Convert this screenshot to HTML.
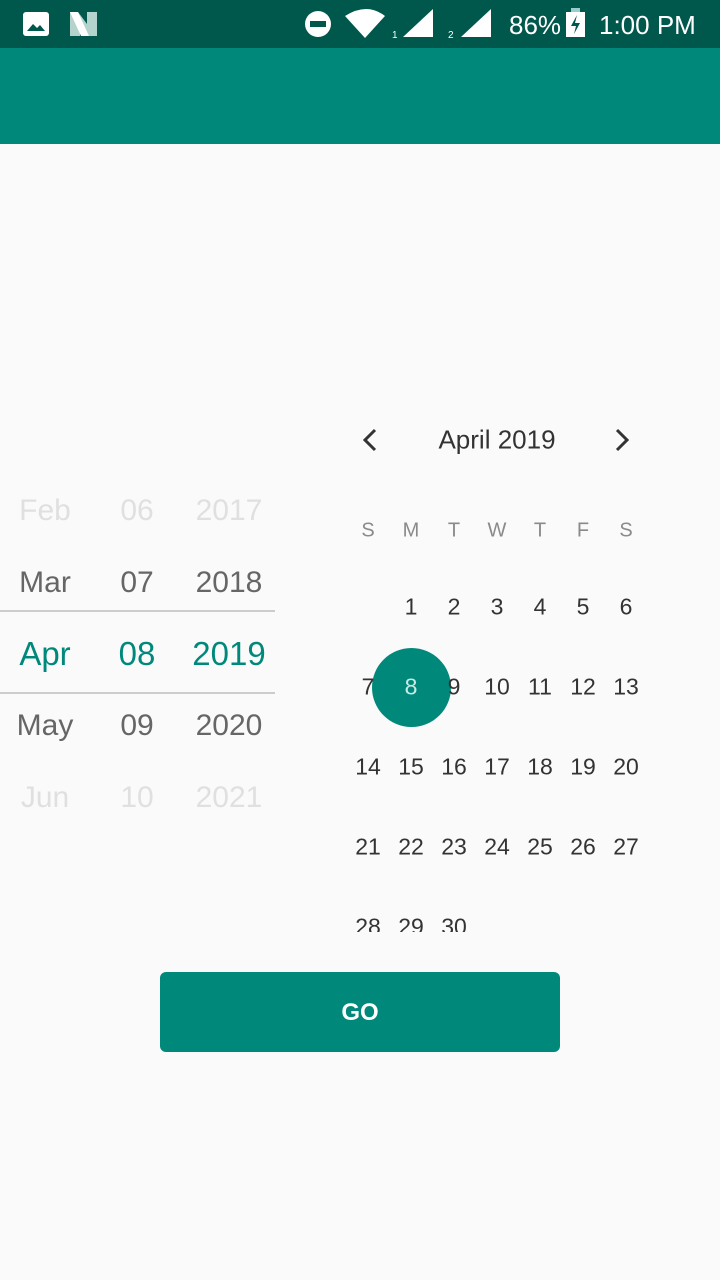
<!DOCTYPE html><html><head><style>
body{margin:0;width:720px;height:1280px;background:#fafafa;font-family:"Liberation Sans",sans-serif;position:relative;overflow:hidden}
.a{position:absolute;transform:translate(-50%,-50%);white-space:nowrap}
.sb{position:absolute;top:0;left:0;width:720px;height:48px;background:#00574b}
.tb{position:absolute;top:48px;left:0;width:720px;height:96px;background:#00897b}
.p{font-size:30px}
.d{font-size:23px;color:#333}
.w{font-size:20px;color:#8a8a8a}
</style></head><body>
<div class="sb"></div><div class="tb"></div>
<svg style="position:absolute;left:0;top:0" width="720" height="48">
<rect x="23" y="12" width="26" height="24" rx="3" fill="#fff"/><path d="M27 31l6-7 4 4 3-3 5 6z" fill="#00574b"/>
<path d="M70 12h8l9 12v-12h10v24h-8l-9-12v12h-10z" fill="#b5d3cd"/><path d="M70 12h8l11 24h-8l-11-24z" fill="#fff"/>
<circle cx="318" cy="24" r="13" fill="#fff"/><rect x="310" y="21" width="16" height="6" fill="#00574b"/>
<path d="M345 16q22-14 40 0l-20 22z" fill="#fff"/>
<text x="392" y="38" fill="#fff" font-size="10">1</text><path d="M403 37l30-28v28z" fill="#fff"/>
<text x="448" y="38" fill="#fff" font-size="10">2</text><path d="M461 37l30-28v28z" fill="#fff"/>
<text x="509" y="34" fill="#fff" font-size="26">86%</text>
<rect x="566" y="12" width="19" height="25" fill="#fff"/><rect x="571" y="8" width="9" height="4" fill="#9cc"/><path d="M577 15l-6 11h5l-2 8 6-11h-5z" fill="#00574b"/>
<text x="599" y="34" fill="#fff" font-size="26">1:00 PM</text>
</svg>
<div class="a p" style="left:45px;top:511px;color:#e0e0e0">Feb</div><div class="a p" style="left:137px;top:511px;color:#e0e0e0">06</div><div class="a p" style="left:229px;top:511px;color:#e0e0e0">2017</div>
<div class="a p" style="left:45px;top:583px;color:#666">Mar</div><div class="a p" style="left:137px;top:583px;color:#666">07</div><div class="a p" style="left:229px;top:583px;color:#666">2018</div>
<div class="a p" style="left:45px;top:654px;color:#00897b;font-size:33px">Apr</div><div class="a p" style="left:137px;top:654px;color:#00897b;font-size:33px">08</div><div class="a p" style="left:229px;top:654px;color:#00897b;font-size:33px">2019</div>
<div class="a p" style="left:45px;top:726px;color:#666">May</div><div class="a p" style="left:137px;top:726px;color:#666">09</div><div class="a p" style="left:229px;top:726px;color:#666">2020</div>
<div class="a p" style="left:45px;top:798px;color:#e0e0e0">Jun</div><div class="a p" style="left:137px;top:798px;color:#e0e0e0">10</div><div class="a p" style="left:229px;top:798px;color:#e0e0e0">2021</div>
<div style="position:absolute;left:0;top:610px;width:275px;height:2px;background:#ccc"></div>
<div style="position:absolute;left:0;top:692px;width:275px;height:2px;background:#ccc"></div>
<svg style="position:absolute;left:355px;top:425px" width="290" height="30"><path d="M20 5l-10 10 10 10M262 5l10 10-10 10" stroke="#333" stroke-width="3" fill="none"/></svg>
<div class="a" style="left:497px;top:440px;font-size:26px;color:#333">April 2019</div>
<div style="position:absolute;left:372px;top:648px;width:79px;height:79px;border-radius:50%;background:#00897b"></div>
<div id="cal"></div>
<div style="position:absolute;left:340px;top:932px;width:320px;height:40px;background:#fafafa"></div>
<div style="position:absolute;left:160px;top:972px;width:400px;height:80px;border-radius:6px;background:#00897b;color:#fff;font-weight:bold;font-size:24px;line-height:82px;text-align:center">GO</div>
<script>
var xs=[368,411,454,497,540,583,626],h='';
'SMTWTFS'.split('').forEach(function(c,i){h+='<div class="a w" style="left:'+xs[i]+'px;top:531px">'+c+'</div>'});
for(var d=1;d<=30;d++){var p=d+0,c=p%7,r=Math.floor(p/7);var col=d==8?'color:#c8ebe5;':'';h+='<div class="a d" style="'+col+'left:'+xs[c]+'px;top:'+(607+r*80)+'px">'+d+'</div>'}
document.getElementById('cal').innerHTML=h;
</script>
</body></html>
